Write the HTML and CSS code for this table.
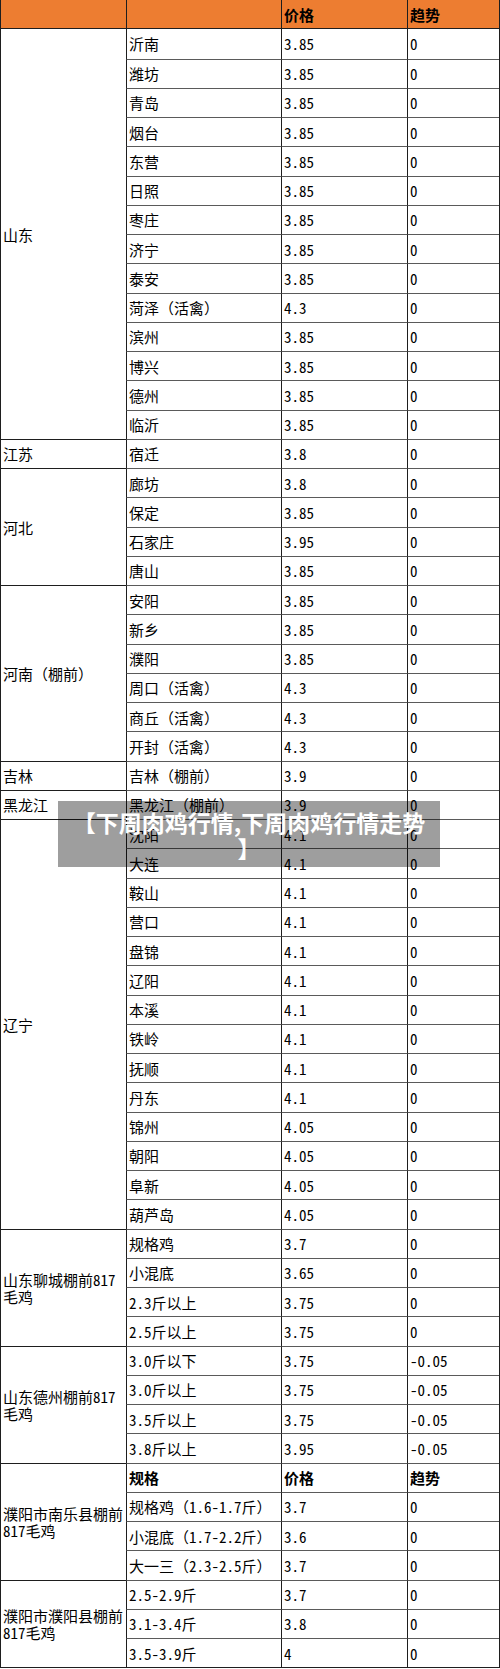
FILE: index.html
```html
<!DOCTYPE html>
<html lang="zh-CN">
<head>
<meta charset="utf-8">
<title>下周肉鸡行情</title>
<link rel="stylesheet" href="styles.css">
</head>
<body>
<div class="wrap">
<table class="price">
<colgroup><col class="c1"><col class="c2"><col class="c3"><col class="c4"></colgroup>
<thead>
<tr class="head"><th></th><th></th><th>价格</th><th>趋势</th></tr>
</thead>
<tbody>
<tr class="grp"><td class="prov" rowspan="14">山东</td><td>沂南</td><td>3.85</td><td>0</td></tr>
<tr><td>潍坊</td><td>3.85</td><td>0</td></tr>
<tr><td>青岛</td><td>3.85</td><td>0</td></tr>
<tr><td>烟台</td><td>3.85</td><td>0</td></tr>
<tr><td>东营</td><td>3.85</td><td>0</td></tr>
<tr><td>日照</td><td>3.85</td><td>0</td></tr>
<tr><td>枣庄</td><td>3.85</td><td>0</td></tr>
<tr><td>济宁</td><td>3.85</td><td>0</td></tr>
<tr><td>泰安</td><td>3.85</td><td>0</td></tr>
<tr><td>菏泽（活禽）</td><td>4.3</td><td>0</td></tr>
<tr><td>滨州</td><td>3.85</td><td>0</td></tr>
<tr><td>博兴</td><td>3.85</td><td>0</td></tr>
<tr><td>德州</td><td>3.85</td><td>0</td></tr>
<tr><td>临沂</td><td>3.85</td><td>0</td></tr>
<tr class="grp"><td class="prov">江苏</td><td>宿迁</td><td>3.8</td><td>0</td></tr>
<tr class="grp"><td class="prov" rowspan="4">河北</td><td>廊坊</td><td>3.8</td><td>0</td></tr>
<tr><td>保定</td><td>3.85</td><td>0</td></tr>
<tr><td>石家庄</td><td>3.95</td><td>0</td></tr>
<tr><td>唐山</td><td>3.85</td><td>0</td></tr>
<tr class="grp"><td class="prov" rowspan="6">河南（棚前）</td><td>安阳</td><td>3.85</td><td>0</td></tr>
<tr><td>新乡</td><td>3.85</td><td>0</td></tr>
<tr><td>濮阳</td><td>3.85</td><td>0</td></tr>
<tr><td>周口（活禽）</td><td>4.3</td><td>0</td></tr>
<tr><td>商丘（活禽）</td><td>4.3</td><td>0</td></tr>
<tr><td>开封（活禽）</td><td>4.3</td><td>0</td></tr>
<tr class="grp"><td class="prov">吉林</td><td>吉林（棚前）</td><td>3.9</td><td>0</td></tr>
<tr class="grp"><td class="prov">黑龙江</td><td>黑龙江（棚前）</td><td>3.9</td><td>0</td></tr>
<tr class="grp"><td class="prov" rowspan="14">辽宁</td><td>沈阳</td><td>4.1</td><td>0</td></tr>
<tr><td>大连</td><td>4.1</td><td>0</td></tr>
<tr><td>鞍山</td><td>4.1</td><td>0</td></tr>
<tr><td>营口</td><td>4.1</td><td>0</td></tr>
<tr><td>盘锦</td><td>4.1</td><td>0</td></tr>
<tr><td>辽阳</td><td>4.1</td><td>0</td></tr>
<tr><td>本溪</td><td>4.1</td><td>0</td></tr>
<tr><td>铁岭</td><td>4.1</td><td>0</td></tr>
<tr><td>抚顺</td><td>4.1</td><td>0</td></tr>
<tr><td>丹东</td><td>4.1</td><td>0</td></tr>
<tr><td>锦州</td><td>4.05</td><td>0</td></tr>
<tr><td>朝阳</td><td>4.05</td><td>0</td></tr>
<tr><td>阜新</td><td>4.05</td><td>0</td></tr>
<tr><td>葫芦岛</td><td>4.05</td><td>0</td></tr>
<tr class="grp"><td class="prov" rowspan="4">山东聊城棚前817毛鸡</td><td>规格鸡</td><td>3.7</td><td>0</td></tr>
<tr><td>小混底</td><td>3.65</td><td>0</td></tr>
<tr><td>2.3斤以上</td><td>3.75</td><td>0</td></tr>
<tr><td>2.5斤以上</td><td>3.75</td><td>0</td></tr>
<tr class="grp"><td class="prov" rowspan="4">山东德州棚前817毛鸡</td><td>3.0斤以下</td><td>3.75</td><td>-0.05</td></tr>
<tr><td>3.0斤以上</td><td>3.75</td><td>-0.05</td></tr>
<tr><td>3.5斤以上</td><td>3.75</td><td>-0.05</td></tr>
<tr><td>3.8斤以上</td><td>3.95</td><td>-0.05</td></tr>
<tr class="grp sub"><td class="prov" rowspan="4">濮阳市南乐县棚前817毛鸡</td><td>规格</td><td>价格</td><td>趋势</td></tr>
<tr><td>规格鸡（1.6-1.7斤）</td><td>3.7</td><td>0</td></tr>
<tr><td>小混底（1.7-2.2斤）</td><td>3.6</td><td>0</td></tr>
<tr><td>大一三（2.3-2.5斤）</td><td>3.7</td><td>0</td></tr>
<tr class="grp"><td class="prov" rowspan="3">濮阳市濮阳县棚前817毛鸡</td><td>2.5-2.9斤</td><td>3.7</td><td>0</td></tr>
<tr><td>3.1-3.4斤</td><td>3.8</td><td>0</td></tr>
<tr><td>3.5-3.9斤</td><td>4</td><td>0</td></tr>
</tbody>
</table>
<div class="caption">【下周肉鸡行情,下周肉鸡行情走势】</div>
</div>
</body>
</html>
```

FILE: styles.css
```css
html, body {
  margin: 0;
  padding: 0;
  background: #ffffff;
}

.wrap {
  position: relative;
  width: 500px;
}

.price {
  width: 500px;
  table-layout: fixed;
  border-collapse: separate;
  border-spacing: 0;
  border-right: 1px solid #1e1e1e;
  border-bottom: 1px solid #1e1e1e;
  font-family: "Noto Sans Mono CJK SC", "Noto Sans CJK SC", monospace;
  font-size: 15px;
  font-weight: 500;
  line-height: 17px;
  color: #000;
}

.c1 { width: 126px; }
.c2 { width: 155px; }
.c3 { width: 126px; }
.c4 { width: 92px; }

.price tr {
  height: 29.263px;
}

.price th,
.price td {
  padding: 0 0 0 2px;
  border-left: 1px solid #1e1e1e;
  border-top: 1px solid #5a5a5a;
  text-align: left;
  vertical-align: middle;
  white-space: nowrap;
  overflow: hidden;
}

.price td.prov {
  white-space: normal;
  word-break: break-all;
  border-top-color: #1e1e1e;
}

.head th {
  background: #ed7d31;
  font-weight: bold;
  border-top: none;
  border-bottom: 1px solid #1e1e1e;
}

.head + tr td,
tbody tr:first-child td {
  border-top: none;
}

.sub td:not(.prov) {
  font-weight: bold;
}

.caption {
  position: absolute;
  left: 58px;
  top: 801px;
  width: 382px;
  height: 66px;
  box-sizing: border-box;
  padding: 8px 10px 0;
  background: rgba(0, 0, 0, 0.38);
  color: #ffffff;
  font-family: "Noto Sans CJK SC", sans-serif;
  font-weight: bold;
  font-size: 23px;
  line-height: 26px;
  text-align: center;
  line-break: anywhere;
  text-spacing-trim: space-all;
}
```
